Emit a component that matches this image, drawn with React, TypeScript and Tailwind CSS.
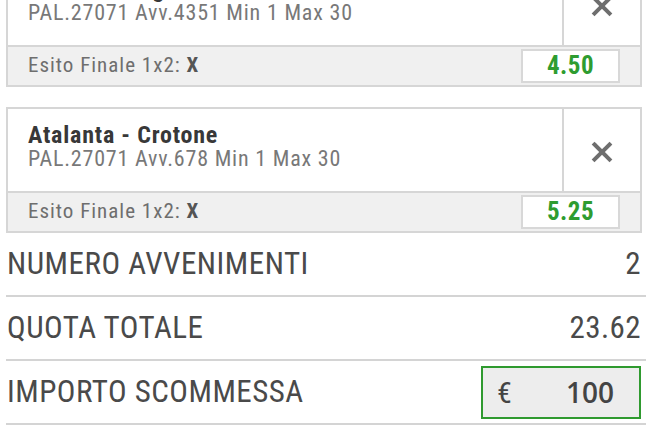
import { X } from "lucide-react";

type Bet = {
  match: string;
  info: string;
  outcome: string;
  odds: string;
};

const bets: Bet[] = [
  { match: "Lazio - Bologna", info: "PAL.27071 Avv.4351 Min 1 Max 30", outcome: "X", odds: "4.50" },
  { match: "Atalanta - Crotone", info: "PAL.27071 Avv.678 Min 1 Max 30", outcome: "X", odds: "5.25" },
];

function BetCard({ bet, last }: { bet: Bet; last?: boolean }) {
  return (
    <div className={`ml-[6px] w-[636px] border-2 border-[#d6d6d6] bg-white ${last ? "" : "mb-[20px]"}`}>
      <div className="flex h-[84px] border-b-2 border-[#d6d6d6]">
        <div className="flex-1 pl-[20px] pt-[13px]">
          <p className="text-[24px] leading-[26px] font-bold tracking-[0.8px] text-[#383838]">{bet.match}</p>
          <p className="text-[22px] leading-[22px] tracking-[0.8px] text-[#787878]">{bet.info}</p>
        </div>
        <div className="flex w-[78px] items-center justify-center border-l-2 border-[#d6d6d6] pt-[4px]">
          <X className="h-[30px] w-[30px] text-[#6e6e6e]" strokeWidth={3.2} strokeLinecap="square" />
        </div>
      </div>
      <div className="flex h-[38px] items-center justify-between bg-[#f0f0f0] pl-[20px] pr-[20px]">
        <p className="text-[21px] tracking-[1px] text-[#6e6e6e]">
          Esito Finale 1x2: <span className="font-bold text-[#555]">{bet.outcome}</span>
        </p>
        <div className="flex h-[34px] w-[99px] items-center justify-center border-2 border-[#d8d8d8] bg-white text-[25px] font-bold tracking-[0.5px] text-[#2e9c30]">
          {bet.odds}
        </div>
      </div>
    </div>
  );
}

function SummaryRow({ label, children }: { label: string; children: React.ReactNode }) {
  return (
    <div className="flex h-[64px] items-center justify-between border-b-2 border-[#d4d4d4] pl-[1px] pr-[5px]">
      <span className="text-[31px] tracking-[0.5px] text-[#4a4a4a]">{label}</span>
      {children}
    </div>
  );
}

export default function App() {
  return (
    <div className="h-[441px] w-[646px] overflow-hidden bg-white font-['Roboto',sans-serif] [font-stretch:condensed]">
      <div className="-mt-[39px]">
        {bets.map((b, i) => (
          <BetCard key={b.odds} bet={b} last={i === bets.length - 1} />
        ))}
        <div className="ml-[6px]">
          <SummaryRow label="NUMERO AVVENIMENTI">
            <span className="text-[31px] tracking-[0.4px] text-[#4a4a4a]">2</span>
          </SummaryRow>
          <SummaryRow label="QUOTA TOTALE">
            <span className="text-[31px] tracking-[0.4px] text-[#4a4a4a]">23.62</span>
          </SummaryRow>
          <SummaryRow label="IMPORTO SCOMMESSA">
            <div className="flex h-[53px] w-[160px] items-center justify-between border-2 border-[#2f9a2f] bg-[#ededed] pl-[14px] pr-[25px]">
              <span className="text-[30px] text-[#444]">€</span>
              <span className="font-['Open_Sans',sans-serif] text-[28px] font-semibold text-[#444] [font-stretch:normal]">100</span>
            </div>
          </SummaryRow>
        </div>
      </div>
    </div>
  );
}
